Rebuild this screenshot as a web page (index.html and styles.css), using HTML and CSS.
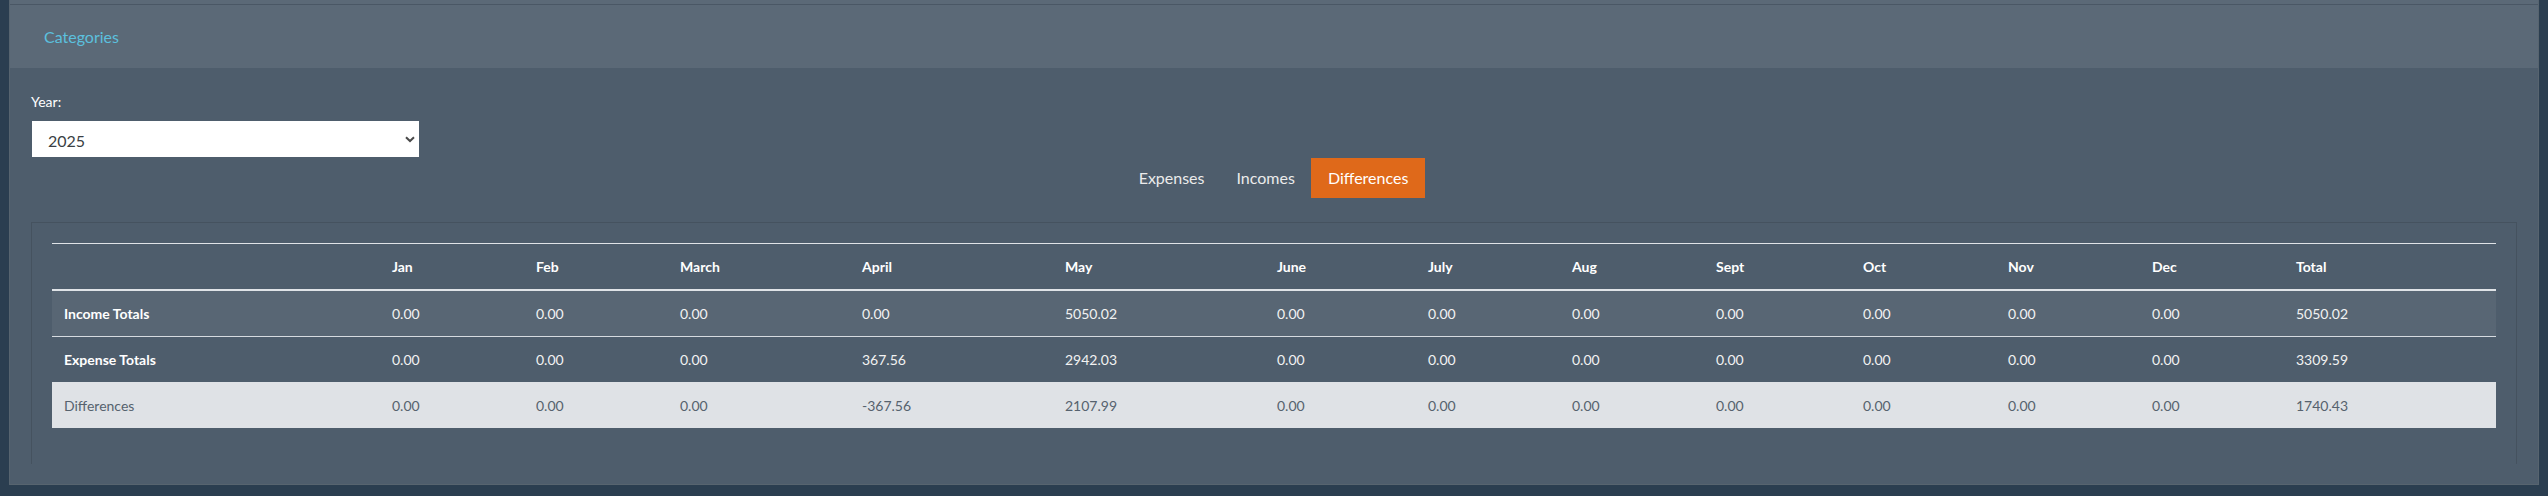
FILE: index.html
```html
<!DOCTYPE html>
<html lang="en">
<head>
<meta charset="utf-8">
<title>Categories</title>
<link rel="stylesheet" href="styles.css">
</head>
<body>
<div class="page">
  <div class="card">
    <div class="card-tail"></div>
    <div class="card-header">
      <a class="header-link" href="#">Categories</a>
    </div>
    <div class="card-body">
      <label class="year-label" for="year">Year:</label>
      <div class="select-wrap">
        <select id="year" class="year-select">
          <option>2025</option>
        </select>
        <svg class="chevron" width="10" height="7" viewBox="0 0 10 7"><path d="M1 1.2 L5 5 L9 1.2" fill="none" stroke="#4a4a4a" stroke-width="2"/></svg>
      </div>
      <nav class="tabs">
        <a class="tab" href="#">Expenses</a>
        <a class="tab" href="#">Incomes</a>
        <a class="tab active" href="#">Differences</a>
      </nav>
      <div class="well">
        <table class="totals">
          <colgroup>
            <col class="c-label"><col class="c-m144"><col class="c-m144"><col class="c-mar"><col class="c-apr"><col class="c-may"><col class="c-jun"><col class="c-m144"><col class="c-m144"><col class="c-sep"><col class="c-oct"><col class="c-m144"><col class="c-m144"><col class="c-tot">
          </colgroup>
          <thead>
            <tr><th></th><th>Jan</th><th>Feb</th><th>March</th><th>April</th><th>May</th><th>June</th><th>July</th><th>Aug</th><th>Sept</th><th>Oct</th><th>Nov</th><th>Dec</th><th>Total</th></tr>
          </thead>
          <tbody>
            <tr class="row-income"><th>Income Totals</th><td>0.00</td><td>0.00</td><td>0.00</td><td>0.00</td><td>5050.02</td><td>0.00</td><td>0.00</td><td>0.00</td><td>0.00</td><td>0.00</td><td>0.00</td><td>0.00</td><td>5050.02</td></tr>
            <tr class="row-expense"><th>Expense Totals</th><td>0.00</td><td>0.00</td><td>0.00</td><td>367.56</td><td>2942.03</td><td>0.00</td><td>0.00</td><td>0.00</td><td>0.00</td><td>0.00</td><td>0.00</td><td>0.00</td><td>3309.59</td></tr>
            <tr class="row-diff"><td>Differences</td><td>0.00</td><td>0.00</td><td>0.00</td><td>-367.56</td><td>2107.99</td><td>0.00</td><td>0.00</td><td>0.00</td><td>0.00</td><td>0.00</td><td>0.00</td><td>0.00</td><td>1740.43</td></tr>
          </tbody>
        </table>
      </div>
    </div>
  </div>
</div>
</body>
</html>
```

FILE: styles.css
```css
html, body {
  margin: 0;
  padding: 0;
  background: #2b3e50;
  font-family: Lato, "Open Sans", "Liberation Sans", sans-serif;
  color: #ebebeb;
}

.page {
  padding: 0 9px 11px;
}

.card {
  background: #4e5d6c;
  border: 1px solid #57646f;
  border-top: 0;
}

.card-tail {
  height: 4px;
  background: #5b6977;
  border-bottom: 1px solid #4a5765;
}

.card-header {
  height: 63px;
  background: #5b6977;
  display: flex;
  align-items: center;
  padding: 0 34px;
}

.header-link {
  color: #5bc0de;
  text-decoration: none;
  font-size: 16px;
  line-height: 24px;
}

.card-body {
  padding: 23px 21px 20px;
}

.year-label {
  display: block;
  font-size: 14px;
  line-height: 21px;
  color: #ffffff;
  margin-bottom: 9px;
}

.select-wrap {
  position: relative;
  width: 387px;
  margin-left: 1px;
}

.year-select {
  display: block;
  width: 387px;
  height: 36px;
  border: 0;
  border-radius: 0;
  background: #ffffff;
  color: #3a3f44;
  font-family: Lato, "Open Sans", sans-serif;
  font-size: 16px;
  padding: 2px 0 0 16px;
  -webkit-appearance: none;
  appearance: none;
  outline: none;
}

.chevron {
  position: absolute;
  right: 4px;
  top: 15px;
  pointer-events: none;
}

.tabs {
  display: flex;
  justify-content: center;
  margin-top: 1px;
}

.tab {
  display: block;
  padding: 8px 16px;
  font-size: 16px;
  line-height: 24px;
  color: #ebebeb;
  text-decoration: none;
}

.tab.active {
  background: #df691a;
  color: #ffffff;
  padding: 8px 17px;
}

.well {
  margin-top: 24px;
  border: 1px solid #45525f;
  border-bottom: 0;
  padding: 20px 20px 36px;
}

.totals {
  width: 100%;
  table-layout: fixed;
  border-collapse: separate;
  border-spacing: 0;
  font-size: 14px;
  line-height: 21px;
}

.c-label { width: 328px; }
.c-m144 { width: 144px; }
.c-mar { width: 182px; }
.c-apr { width: 203px; }
.c-may { width: 212px; }
.c-jun { width: 151px; }
.c-sep { width: 147px; }
.c-oct { width: 145px; }
.c-tot { width: 212px; }

.totals th,
.totals td {
  padding: 12px;
  text-align: left;
  vertical-align: middle;
}

.totals thead th {
  color: #ffffff;
  font-weight: 700;
  border-top: 1px solid #dfe3e7;
  border-bottom: 2px solid #dfe3e7;
}

.totals tbody th {
  color: #ffffff;
  font-weight: 700;
}

.totals tbody td {
  color: #f2f2f2;
}

.row-income th,
.row-income td {
  background: #586674;
  border-bottom: 1px solid #d6dbe0;
}

.totals .row-diff td {
  background: #dfe2e6;
  color: #56626e;
  padding-top: 13px;
}
```
